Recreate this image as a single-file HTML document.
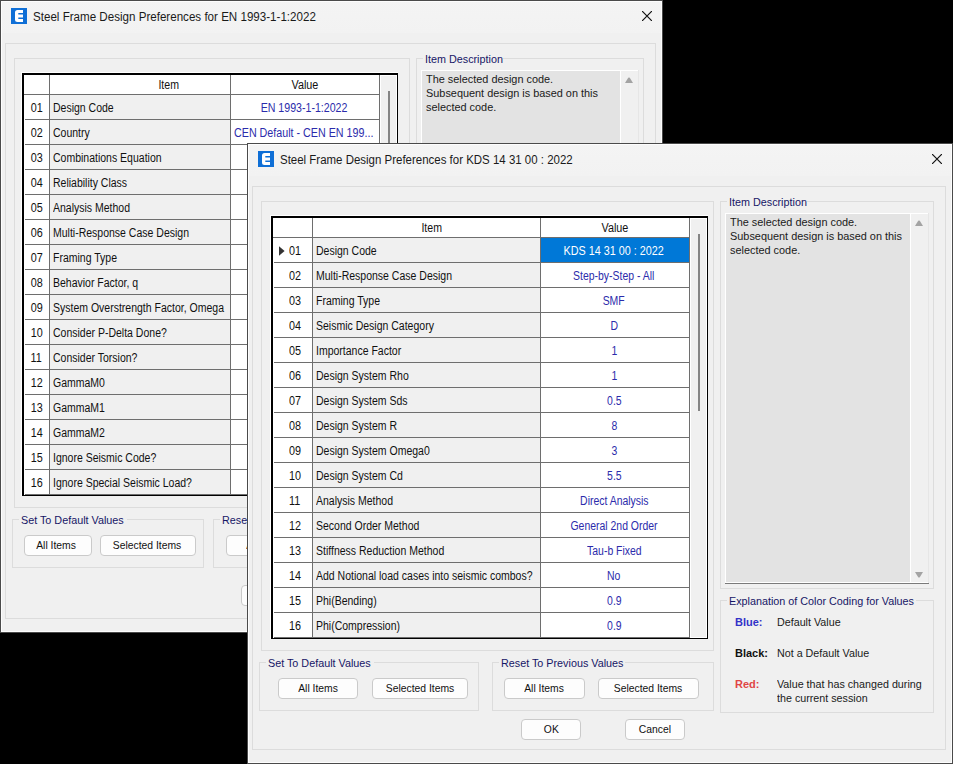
<!DOCTYPE html><html><head><meta charset="utf-8"><style>html,body{margin:0;padding:0}body{width:953px;height:764px;background:#000;position:relative;overflow:hidden;font-family:"Liberation Sans",sans-serif}</style></head><body>
<div style="position:absolute;left:0px;top:0px;width:663px;height:633px;background:#f0f0f0;overflow:hidden">
<div style="position:absolute;left:0px;top:0px;width:663px;height:33px;background:linear-gradient(#f4f4f4,#f2f2f2);"></div>
<svg style="position:absolute;left:11px;top:8px" width="16" height="16" viewBox="0 0 16 16"><rect x="0" y="0" width="16" height="16" fill="#0f6fd6"/><path d="M6.5 2 H12 V5 H7.3 V6.6 H12 V9.4 H7.3 V11 H12 V14 H6.5 Q4 14 4 11.5 V4.5 Q4 2 6.5 2 Z" fill="#fff"/></svg>
<div style="position:absolute;left:33px;top:10px;white-space:nowrap;font-size:12px;line-height:14px;color:#1a1a1a;transform:scaleX(0.966);transform-origin:left;">Steel Frame Design Preferences for EN 1993-1-1:2022</div>
<svg style="position:absolute;left:642px;top:11px" width="10" height="10" viewBox="0 0 10 10"><path d="M0 0 L10 10 M10 0 L0 10" stroke="#111" stroke-width="1.2"/></svg>
<div style="position:absolute;left:5px;top:43px;width:651px;height:576px;box-sizing:border-box;border:1px solid #dcdcdc;"></div>
<div style="position:absolute;left:14px;top:58px;width:396px;height:450px;box-sizing:border-box;border:1px solid #dcdcdc;"></div>
<div style="position:absolute;left:21px;top:72px;width:377px;height:424px;background:#fff;"></div>
<div style="position:absolute;left:22px;top:73px;width:376px;height:423px;box-sizing:border-box;border-top:2px solid #000;border-left:2px solid #000;border-right:1px solid #000;border-bottom:1px solid #000;"></div>
<div style="position:absolute;left:50px;top:95px;width:180px;height:400px;background:#f0f0f0;"></div>
<div style="position:absolute;left:380px;top:75px;width:17px;height:420px;background:#fff;"></div>
<div style="position:absolute;left:381px;top:76px;width:15px;height:418px;background:#f0f0f0;"></div>
<div style="position:absolute;left:388px;top:91px;width:2px;height:209px;background:#858585;"></div>
<div style="position:absolute;left:24px;top:94px;width:355px;height:1px;background:#6e6e6e;"></div>
<div style="position:absolute;left:49px;top:75px;width:1px;height:420px;background:#6e6e6e;"></div>
<div style="position:absolute;left:230px;top:75px;width:1px;height:420px;background:#6e6e6e;"></div>
<div style="position:absolute;left:379px;top:75px;width:1px;height:420px;background:#6e6e6e;"></div>
<div style="position:absolute;left:109px;top:78px;width:120px;height:14px;text-align:center;white-space:nowrap;font-size:12px;line-height:14px;color:#111;"><span style="display:inline-block;transform:scaleX(0.88);transform-origin:center">Item</span></div>
<div style="position:absolute;left:231px;top:78px;width:148px;height:14px;text-align:center;white-space:nowrap;font-size:12px;line-height:14px;color:#111;"><span style="display:inline-block;transform:scaleX(0.9);transform-origin:center">Value</span></div>
<div style="position:absolute;left:25px;top:119px;width:354px;height:1px;background:#6e6e6e;"></div>
<div style="position:absolute;left:24px;top:101px;width:25px;height:14px;text-align:center;white-space:nowrap;font-size:12px;line-height:14px;color:#111;"><span style="display:inline-block;transform:scaleX(0.9);transform-origin:center">01</span></div>
<div style="position:absolute;left:53px;top:101px;white-space:nowrap;font-size:12px;line-height:14px;color:#111;transform:scaleX(0.875);transform-origin:left;">Design Code</div>
<div style="position:absolute;left:230px;top:101px;width:148px;height:14px;text-align:center;white-space:nowrap;font-size:12px;line-height:14px;color:#2b2bab;"><span style="display:inline-block;transform:scaleX(0.885);transform-origin:center">EN 1993-1-1:2022</span></div>
<div style="position:absolute;left:25px;top:144px;width:354px;height:1px;background:#6e6e6e;"></div>
<div style="position:absolute;left:24px;top:126px;width:25px;height:14px;text-align:center;white-space:nowrap;font-size:12px;line-height:14px;color:#111;"><span style="display:inline-block;transform:scaleX(0.9);transform-origin:center">02</span></div>
<div style="position:absolute;left:53px;top:126px;white-space:nowrap;font-size:12px;line-height:14px;color:#111;transform:scaleX(0.875);transform-origin:left;">Country</div>
<div style="position:absolute;left:234px;top:126px;white-space:nowrap;font-size:12px;line-height:14px;color:#2b2bab;transform:scaleX(0.893);transform-origin:left;">CEN Default - CEN EN 199...</div>
<div style="position:absolute;left:25px;top:169px;width:354px;height:1px;background:#6e6e6e;"></div>
<div style="position:absolute;left:24px;top:151px;width:25px;height:14px;text-align:center;white-space:nowrap;font-size:12px;line-height:14px;color:#111;"><span style="display:inline-block;transform:scaleX(0.9);transform-origin:center">03</span></div>
<div style="position:absolute;left:53px;top:151px;white-space:nowrap;font-size:12px;line-height:14px;color:#111;transform:scaleX(0.875);transform-origin:left;">Combinations Equation</div>
<div style="position:absolute;left:25px;top:194px;width:354px;height:1px;background:#6e6e6e;"></div>
<div style="position:absolute;left:24px;top:176px;width:25px;height:14px;text-align:center;white-space:nowrap;font-size:12px;line-height:14px;color:#111;"><span style="display:inline-block;transform:scaleX(0.9);transform-origin:center">04</span></div>
<div style="position:absolute;left:53px;top:176px;white-space:nowrap;font-size:12px;line-height:14px;color:#111;transform:scaleX(0.875);transform-origin:left;">Reliability Class</div>
<div style="position:absolute;left:25px;top:219px;width:354px;height:1px;background:#6e6e6e;"></div>
<div style="position:absolute;left:24px;top:201px;width:25px;height:14px;text-align:center;white-space:nowrap;font-size:12px;line-height:14px;color:#111;"><span style="display:inline-block;transform:scaleX(0.9);transform-origin:center">05</span></div>
<div style="position:absolute;left:53px;top:201px;white-space:nowrap;font-size:12px;line-height:14px;color:#111;transform:scaleX(0.875);transform-origin:left;">Analysis Method</div>
<div style="position:absolute;left:25px;top:244px;width:354px;height:1px;background:#6e6e6e;"></div>
<div style="position:absolute;left:24px;top:226px;width:25px;height:14px;text-align:center;white-space:nowrap;font-size:12px;line-height:14px;color:#111;"><span style="display:inline-block;transform:scaleX(0.9);transform-origin:center">06</span></div>
<div style="position:absolute;left:53px;top:226px;white-space:nowrap;font-size:12px;line-height:14px;color:#111;transform:scaleX(0.875);transform-origin:left;">Multi-Response Case Design</div>
<div style="position:absolute;left:25px;top:269px;width:354px;height:1px;background:#6e6e6e;"></div>
<div style="position:absolute;left:24px;top:251px;width:25px;height:14px;text-align:center;white-space:nowrap;font-size:12px;line-height:14px;color:#111;"><span style="display:inline-block;transform:scaleX(0.9);transform-origin:center">07</span></div>
<div style="position:absolute;left:53px;top:251px;white-space:nowrap;font-size:12px;line-height:14px;color:#111;transform:scaleX(0.875);transform-origin:left;">Framing Type</div>
<div style="position:absolute;left:25px;top:294px;width:354px;height:1px;background:#6e6e6e;"></div>
<div style="position:absolute;left:24px;top:276px;width:25px;height:14px;text-align:center;white-space:nowrap;font-size:12px;line-height:14px;color:#111;"><span style="display:inline-block;transform:scaleX(0.9);transform-origin:center">08</span></div>
<div style="position:absolute;left:53px;top:276px;white-space:nowrap;font-size:12px;line-height:14px;color:#111;transform:scaleX(0.875);transform-origin:left;">Behavior Factor, q</div>
<div style="position:absolute;left:25px;top:319px;width:354px;height:1px;background:#6e6e6e;"></div>
<div style="position:absolute;left:24px;top:301px;width:25px;height:14px;text-align:center;white-space:nowrap;font-size:12px;line-height:14px;color:#111;"><span style="display:inline-block;transform:scaleX(0.9);transform-origin:center">09</span></div>
<div style="position:absolute;left:53px;top:301px;white-space:nowrap;font-size:12px;line-height:14px;color:#111;transform:scaleX(0.875);transform-origin:left;">System Overstrength Factor, Omega</div>
<div style="position:absolute;left:25px;top:344px;width:354px;height:1px;background:#6e6e6e;"></div>
<div style="position:absolute;left:24px;top:326px;width:25px;height:14px;text-align:center;white-space:nowrap;font-size:12px;line-height:14px;color:#111;"><span style="display:inline-block;transform:scaleX(0.9);transform-origin:center">10</span></div>
<div style="position:absolute;left:53px;top:326px;white-space:nowrap;font-size:12px;line-height:14px;color:#111;transform:scaleX(0.875);transform-origin:left;">Consider P-Delta Done?</div>
<div style="position:absolute;left:25px;top:369px;width:354px;height:1px;background:#6e6e6e;"></div>
<div style="position:absolute;left:24px;top:351px;width:25px;height:14px;text-align:center;white-space:nowrap;font-size:12px;line-height:14px;color:#111;"><span style="display:inline-block;transform:scaleX(0.9);transform-origin:center">11</span></div>
<div style="position:absolute;left:53px;top:351px;white-space:nowrap;font-size:12px;line-height:14px;color:#111;transform:scaleX(0.875);transform-origin:left;">Consider Torsion?</div>
<div style="position:absolute;left:25px;top:394px;width:354px;height:1px;background:#6e6e6e;"></div>
<div style="position:absolute;left:24px;top:376px;width:25px;height:14px;text-align:center;white-space:nowrap;font-size:12px;line-height:14px;color:#111;"><span style="display:inline-block;transform:scaleX(0.9);transform-origin:center">12</span></div>
<div style="position:absolute;left:53px;top:376px;white-space:nowrap;font-size:12px;line-height:14px;color:#111;transform:scaleX(0.875);transform-origin:left;">GammaM0</div>
<div style="position:absolute;left:25px;top:419px;width:354px;height:1px;background:#6e6e6e;"></div>
<div style="position:absolute;left:24px;top:401px;width:25px;height:14px;text-align:center;white-space:nowrap;font-size:12px;line-height:14px;color:#111;"><span style="display:inline-block;transform:scaleX(0.9);transform-origin:center">13</span></div>
<div style="position:absolute;left:53px;top:401px;white-space:nowrap;font-size:12px;line-height:14px;color:#111;transform:scaleX(0.875);transform-origin:left;">GammaM1</div>
<div style="position:absolute;left:25px;top:444px;width:354px;height:1px;background:#6e6e6e;"></div>
<div style="position:absolute;left:24px;top:426px;width:25px;height:14px;text-align:center;white-space:nowrap;font-size:12px;line-height:14px;color:#111;"><span style="display:inline-block;transform:scaleX(0.9);transform-origin:center">14</span></div>
<div style="position:absolute;left:53px;top:426px;white-space:nowrap;font-size:12px;line-height:14px;color:#111;transform:scaleX(0.875);transform-origin:left;">GammaM2</div>
<div style="position:absolute;left:25px;top:469px;width:354px;height:1px;background:#6e6e6e;"></div>
<div style="position:absolute;left:24px;top:451px;width:25px;height:14px;text-align:center;white-space:nowrap;font-size:12px;line-height:14px;color:#111;"><span style="display:inline-block;transform:scaleX(0.9);transform-origin:center">15</span></div>
<div style="position:absolute;left:53px;top:451px;white-space:nowrap;font-size:12px;line-height:14px;color:#111;transform:scaleX(0.875);transform-origin:left;">Ignore Seismic Code?</div>
<div style="position:absolute;left:25px;top:494px;width:354px;height:1px;background:#6e6e6e;"></div>
<div style="position:absolute;left:24px;top:476px;width:25px;height:14px;text-align:center;white-space:nowrap;font-size:12px;line-height:14px;color:#111;"><span style="display:inline-block;transform:scaleX(0.9);transform-origin:center">16</span></div>
<div style="position:absolute;left:53px;top:476px;white-space:nowrap;font-size:12px;line-height:14px;color:#111;transform:scaleX(0.875);transform-origin:left;">Ignore Special Seismic Load?</div>
<div style="position:absolute;left:416px;top:58px;width:228px;height:400px;box-sizing:border-box;border:1px solid #dcdcdc;"></div>
<div style="position:absolute;left:423px;top:57px;width:80px;height:3px;background:#f0f0f0;"></div>
<div style="position:absolute;left:425px;top:53px;white-space:nowrap;font-size:11px;line-height:13px;color:#161666;transform:scaleX(0.98);transform-origin:left;">Item Description</div>
<div style="position:absolute;left:421px;top:70px;width:217px;height:380px;background:#fff;"></div>
<div style="position:absolute;left:638px;top:70px;width:1px;height:380px;background:#e6e6e6;"></div>
<div style="position:absolute;left:422px;top:71px;width:198px;height:378px;background:#e3e3e3;"></div>
<div style="position:absolute;left:621px;top:71px;width:17px;height:378px;background:#f0f0f0;"></div>
<div style="position:absolute;left:421px;top:450px;width:218px;height:1px;background:#7a7a7a;"></div>
<svg style="position:absolute;left:625px;top:77px" width="8" height="6" viewBox="0 0 8 6"><path d="M0 6 L3.2 0.8 Q4 0 4.8 0.8 L8 6 Z" fill="#a3a3a3"/></svg>
<div style="position:absolute;left:426px;top:73px;white-space:nowrap;font-size:11px;line-height:13px;color:#1a1a1a;transform:scaleX(0.99);transform-origin:left;">The selected design code.</div>
<div style="position:absolute;left:426px;top:87px;white-space:nowrap;font-size:11px;line-height:13px;color:#1a1a1a;transform:scaleX(0.99);transform-origin:left;">Subsequent design is based on this</div>
<div style="position:absolute;left:426px;top:101px;white-space:nowrap;font-size:11px;line-height:13px;color:#1a1a1a;transform:scaleX(0.99);transform-origin:left;">selected code.</div>
<div style="position:absolute;left:12px;top:519px;width:192px;height:49px;box-sizing:border-box;border:1px solid #dcdcdc;"></div>
<div style="position:absolute;left:19px;top:518px;width:108px;height:3px;background:#f0f0f0;"></div>
<div style="position:absolute;left:21px;top:514px;white-space:nowrap;font-size:11px;line-height:13px;color:#161666;transform:scaleX(0.98);transform-origin:left;">Set To Default Values</div>
<div style="position:absolute;left:24px;top:535px;width:68px;height:21px;box-sizing:border-box;border:1px solid #cacaca;border-radius:4px;background:#fdfdfd;"></div>
<div style="position:absolute;left:22px;top:539px;width:68px;height:13px;text-align:center;white-space:nowrap;font-size:11.5px;line-height:13px;color:#111;"><span style="display:inline-block;transform:scaleX(0.9);transform-origin:center">All Items</span></div>
<div style="position:absolute;left:100px;top:535px;width:96px;height:21px;box-sizing:border-box;border:1px solid #cacaca;border-radius:4px;background:#fdfdfd;"></div>
<div style="position:absolute;left:99px;top:539px;width:96px;height:13px;text-align:center;white-space:nowrap;font-size:11.5px;line-height:13px;color:#111;"><span style="display:inline-block;transform:scaleX(0.9);transform-origin:center">Selected Items</span></div>
<div style="position:absolute;left:213px;top:519px;width:200px;height:49px;box-sizing:border-box;border:1px solid #dcdcdc;"></div>
<div style="position:absolute;left:220px;top:518px;width:126px;height:3px;background:#f0f0f0;"></div>
<div style="position:absolute;left:222px;top:514px;white-space:nowrap;font-size:11px;line-height:13px;color:#161666;transform:scaleX(0.98);transform-origin:left;">Reset To Previous Values</div>
<div style="position:absolute;left:226px;top:535px;width:80px;height:21px;box-sizing:border-box;border:1px solid #cacaca;border-radius:4px;background:#fdfdfd;"></div>
<div style="position:absolute;left:226px;top:539px;width:80px;height:13px;text-align:center;white-space:nowrap;font-size:11.5px;line-height:13px;color:#111;"><span style="display:inline-block;transform:scaleX(0.9);transform-origin:center">All Items</span></div>
<div style="position:absolute;left:241px;top:585px;width:60px;height:21px;box-sizing:border-box;border:1px solid #cacaca;border-radius:4px;background:#fdfdfd;"></div>
<div style="position:absolute;left:241px;top:589px;width:60px;height:13px;text-align:center;white-space:nowrap;font-size:11.5px;line-height:13px;color:#111;"><span style="display:inline-block;transform:scaleX(0.9);transform-origin:center">OK</span></div>
<div style="position:absolute;left:0px;top:0px;width:663px;height:633px;box-sizing:border-box;border:1px solid #4a4a4a;box-shadow:inset 0 0 0 1px #fdfdfd;"></div>
</div>
<div style="position:absolute;left:247px;top:143px;width:706px;height:621px;background:#f0f0f0;overflow:hidden">
<div style="position:absolute;left:0px;top:0px;width:706px;height:33px;background:linear-gradient(#f4f4f4,#f2f2f2);"></div>
<svg style="position:absolute;left:11px;top:8px" width="16" height="16" viewBox="0 0 16 16"><rect x="0" y="0" width="16" height="16" fill="#0f6fd6"/><path d="M6.5 2 H12 V5 H7.3 V6.6 H12 V9.4 H7.3 V11 H12 V14 H6.5 Q4 14 4 11.5 V4.5 Q4 2 6.5 2 Z" fill="#fff"/></svg>
<div style="position:absolute;left:33px;top:10px;white-space:nowrap;font-size:12px;line-height:14px;color:#1a1a1a;transform:scaleX(0.956);transform-origin:left;">Steel Frame Design Preferences for KDS 14 31 00 : 2022</div>
<svg style="position:absolute;left:685px;top:11px" width="10" height="10" viewBox="0 0 10 10"><path d="M0 0 L10 10 M10 0 L0 10" stroke="#111" stroke-width="1.2"/></svg>
<div style="position:absolute;left:5px;top:43px;width:694px;height:564px;box-sizing:border-box;border:1px solid #dcdcdc;"></div>
<div style="position:absolute;left:14px;top:58px;width:453px;height:450px;box-sizing:border-box;border:1px solid #dcdcdc;"></div>
<div style="position:absolute;left:23px;top:72px;width:438px;height:424px;background:#fff;"></div>
<div style="position:absolute;left:24px;top:73px;width:437px;height:423px;box-sizing:border-box;border-top:2px solid #000;border-left:2px solid #000;border-right:1px solid #000;border-bottom:1px solid #000;"></div>
<div style="position:absolute;left:66px;top:95px;width:227px;height:400px;background:#f0f0f0;"></div>
<div style="position:absolute;left:443px;top:75px;width:17px;height:420px;background:#fff;"></div>
<div style="position:absolute;left:444px;top:76px;width:15px;height:418px;background:#f0f0f0;"></div>
<div style="position:absolute;left:451px;top:91px;width:2px;height:177px;background:#858585;"></div>
<div style="position:absolute;left:26px;top:94px;width:416px;height:1px;background:#6e6e6e;"></div>
<div style="position:absolute;left:65px;top:75px;width:1px;height:420px;background:#6e6e6e;"></div>
<div style="position:absolute;left:293px;top:75px;width:1px;height:420px;background:#6e6e6e;"></div>
<div style="position:absolute;left:442px;top:75px;width:1px;height:420px;background:#6e6e6e;"></div>
<div style="position:absolute;left:125px;top:78px;width:120px;height:14px;text-align:center;white-space:nowrap;font-size:12px;line-height:14px;color:#111;"><span style="display:inline-block;transform:scaleX(0.88);transform-origin:center">Item</span></div>
<div style="position:absolute;left:294px;top:78px;width:148px;height:14px;text-align:center;white-space:nowrap;font-size:12px;line-height:14px;color:#111;"><span style="display:inline-block;transform:scaleX(0.9);transform-origin:center">Value</span></div>
<div style="position:absolute;left:27px;top:119px;width:415px;height:1px;background:#6e6e6e;"></div>
<div style="position:absolute;left:294px;top:95px;width:148px;height:24px;background:#0078d7;"></div>
<svg style="position:absolute;left:32px;top:103px" width="6" height="10" viewBox="0 0 6 10"><path d="M0 0.3 L5.6 5 L0 9.7 Z" fill="#333"/></svg>
<div style="position:absolute;left:42px;top:101px;white-space:nowrap;font-size:12px;line-height:14px;color:#111;transform:scaleX(0.9);transform-origin:left;">01</div>
<div style="position:absolute;left:69px;top:101px;white-space:nowrap;font-size:12px;line-height:14px;color:#111;transform:scaleX(0.875);transform-origin:left;">Design Code</div>
<div style="position:absolute;left:293px;top:101px;width:148px;height:14px;text-align:center;white-space:nowrap;font-size:12px;line-height:14px;color:#fff;"><span style="display:inline-block;transform:scaleX(0.9);transform-origin:center">KDS 14 31 00 : 2022</span></div>
<div style="position:absolute;left:27px;top:144px;width:415px;height:1px;background:#6e6e6e;"></div>
<div style="position:absolute;left:42px;top:126px;white-space:nowrap;font-size:12px;line-height:14px;color:#111;transform:scaleX(0.9);transform-origin:left;">02</div>
<div style="position:absolute;left:69px;top:126px;white-space:nowrap;font-size:12px;line-height:14px;color:#111;transform:scaleX(0.875);transform-origin:left;">Multi-Response Case Design</div>
<div style="position:absolute;left:293px;top:126px;width:148px;height:14px;text-align:center;white-space:nowrap;font-size:12px;line-height:14px;color:#2b2bab;"><span style="display:inline-block;transform:scaleX(0.87);transform-origin:center">Step-by-Step - All</span></div>
<div style="position:absolute;left:27px;top:169px;width:415px;height:1px;background:#6e6e6e;"></div>
<div style="position:absolute;left:42px;top:151px;white-space:nowrap;font-size:12px;line-height:14px;color:#111;transform:scaleX(0.9);transform-origin:left;">03</div>
<div style="position:absolute;left:69px;top:151px;white-space:nowrap;font-size:12px;line-height:14px;color:#111;transform:scaleX(0.875);transform-origin:left;">Framing Type</div>
<div style="position:absolute;left:293px;top:151px;width:148px;height:14px;text-align:center;white-space:nowrap;font-size:12px;line-height:14px;color:#2b2bab;"><span style="display:inline-block;transform:scaleX(0.87);transform-origin:center">SMF</span></div>
<div style="position:absolute;left:27px;top:194px;width:415px;height:1px;background:#6e6e6e;"></div>
<div style="position:absolute;left:42px;top:176px;white-space:nowrap;font-size:12px;line-height:14px;color:#111;transform:scaleX(0.9);transform-origin:left;">04</div>
<div style="position:absolute;left:69px;top:176px;white-space:nowrap;font-size:12px;line-height:14px;color:#111;transform:scaleX(0.875);transform-origin:left;">Seismic Design Category</div>
<div style="position:absolute;left:293px;top:176px;width:148px;height:14px;text-align:center;white-space:nowrap;font-size:12px;line-height:14px;color:#2b2bab;"><span style="display:inline-block;transform:scaleX(0.87);transform-origin:center">D</span></div>
<div style="position:absolute;left:27px;top:219px;width:415px;height:1px;background:#6e6e6e;"></div>
<div style="position:absolute;left:42px;top:201px;white-space:nowrap;font-size:12px;line-height:14px;color:#111;transform:scaleX(0.9);transform-origin:left;">05</div>
<div style="position:absolute;left:69px;top:201px;white-space:nowrap;font-size:12px;line-height:14px;color:#111;transform:scaleX(0.875);transform-origin:left;">Importance Factor</div>
<div style="position:absolute;left:293px;top:201px;width:148px;height:14px;text-align:center;white-space:nowrap;font-size:12px;line-height:14px;color:#2b2bab;"><span style="display:inline-block;transform:scaleX(0.87);transform-origin:center">1</span></div>
<div style="position:absolute;left:27px;top:244px;width:415px;height:1px;background:#6e6e6e;"></div>
<div style="position:absolute;left:42px;top:226px;white-space:nowrap;font-size:12px;line-height:14px;color:#111;transform:scaleX(0.9);transform-origin:left;">06</div>
<div style="position:absolute;left:69px;top:226px;white-space:nowrap;font-size:12px;line-height:14px;color:#111;transform:scaleX(0.875);transform-origin:left;">Design System Rho</div>
<div style="position:absolute;left:293px;top:226px;width:148px;height:14px;text-align:center;white-space:nowrap;font-size:12px;line-height:14px;color:#2b2bab;"><span style="display:inline-block;transform:scaleX(0.87);transform-origin:center">1</span></div>
<div style="position:absolute;left:27px;top:269px;width:415px;height:1px;background:#6e6e6e;"></div>
<div style="position:absolute;left:42px;top:251px;white-space:nowrap;font-size:12px;line-height:14px;color:#111;transform:scaleX(0.9);transform-origin:left;">07</div>
<div style="position:absolute;left:69px;top:251px;white-space:nowrap;font-size:12px;line-height:14px;color:#111;transform:scaleX(0.875);transform-origin:left;">Design System Sds</div>
<div style="position:absolute;left:293px;top:251px;width:148px;height:14px;text-align:center;white-space:nowrap;font-size:12px;line-height:14px;color:#2b2bab;"><span style="display:inline-block;transform:scaleX(0.87);transform-origin:center">0.5</span></div>
<div style="position:absolute;left:27px;top:294px;width:415px;height:1px;background:#6e6e6e;"></div>
<div style="position:absolute;left:42px;top:276px;white-space:nowrap;font-size:12px;line-height:14px;color:#111;transform:scaleX(0.9);transform-origin:left;">08</div>
<div style="position:absolute;left:69px;top:276px;white-space:nowrap;font-size:12px;line-height:14px;color:#111;transform:scaleX(0.875);transform-origin:left;">Design System R</div>
<div style="position:absolute;left:293px;top:276px;width:148px;height:14px;text-align:center;white-space:nowrap;font-size:12px;line-height:14px;color:#2b2bab;"><span style="display:inline-block;transform:scaleX(0.87);transform-origin:center">8</span></div>
<div style="position:absolute;left:27px;top:319px;width:415px;height:1px;background:#6e6e6e;"></div>
<div style="position:absolute;left:42px;top:301px;white-space:nowrap;font-size:12px;line-height:14px;color:#111;transform:scaleX(0.9);transform-origin:left;">09</div>
<div style="position:absolute;left:69px;top:301px;white-space:nowrap;font-size:12px;line-height:14px;color:#111;transform:scaleX(0.875);transform-origin:left;">Design System Omega0</div>
<div style="position:absolute;left:293px;top:301px;width:148px;height:14px;text-align:center;white-space:nowrap;font-size:12px;line-height:14px;color:#2b2bab;"><span style="display:inline-block;transform:scaleX(0.87);transform-origin:center">3</span></div>
<div style="position:absolute;left:27px;top:344px;width:415px;height:1px;background:#6e6e6e;"></div>
<div style="position:absolute;left:42px;top:326px;white-space:nowrap;font-size:12px;line-height:14px;color:#111;transform:scaleX(0.9);transform-origin:left;">10</div>
<div style="position:absolute;left:69px;top:326px;white-space:nowrap;font-size:12px;line-height:14px;color:#111;transform:scaleX(0.875);transform-origin:left;">Design System Cd</div>
<div style="position:absolute;left:293px;top:326px;width:148px;height:14px;text-align:center;white-space:nowrap;font-size:12px;line-height:14px;color:#2b2bab;"><span style="display:inline-block;transform:scaleX(0.87);transform-origin:center">5.5</span></div>
<div style="position:absolute;left:27px;top:369px;width:415px;height:1px;background:#6e6e6e;"></div>
<div style="position:absolute;left:42px;top:351px;white-space:nowrap;font-size:12px;line-height:14px;color:#111;transform:scaleX(0.9);transform-origin:left;">11</div>
<div style="position:absolute;left:69px;top:351px;white-space:nowrap;font-size:12px;line-height:14px;color:#111;transform:scaleX(0.875);transform-origin:left;">Analysis Method</div>
<div style="position:absolute;left:293px;top:351px;width:148px;height:14px;text-align:center;white-space:nowrap;font-size:12px;line-height:14px;color:#2b2bab;"><span style="display:inline-block;transform:scaleX(0.87);transform-origin:center">Direct Analysis</span></div>
<div style="position:absolute;left:27px;top:394px;width:415px;height:1px;background:#6e6e6e;"></div>
<div style="position:absolute;left:42px;top:376px;white-space:nowrap;font-size:12px;line-height:14px;color:#111;transform:scaleX(0.9);transform-origin:left;">12</div>
<div style="position:absolute;left:69px;top:376px;white-space:nowrap;font-size:12px;line-height:14px;color:#111;transform:scaleX(0.875);transform-origin:left;">Second Order Method</div>
<div style="position:absolute;left:293px;top:376px;width:148px;height:14px;text-align:center;white-space:nowrap;font-size:12px;line-height:14px;color:#2b2bab;"><span style="display:inline-block;transform:scaleX(0.87);transform-origin:center">General 2nd Order</span></div>
<div style="position:absolute;left:27px;top:419px;width:415px;height:1px;background:#6e6e6e;"></div>
<div style="position:absolute;left:42px;top:401px;white-space:nowrap;font-size:12px;line-height:14px;color:#111;transform:scaleX(0.9);transform-origin:left;">13</div>
<div style="position:absolute;left:69px;top:401px;white-space:nowrap;font-size:12px;line-height:14px;color:#111;transform:scaleX(0.875);transform-origin:left;">Stiffness Reduction Method</div>
<div style="position:absolute;left:293px;top:401px;width:148px;height:14px;text-align:center;white-space:nowrap;font-size:12px;line-height:14px;color:#2b2bab;"><span style="display:inline-block;transform:scaleX(0.87);transform-origin:center">Tau-b Fixed</span></div>
<div style="position:absolute;left:27px;top:444px;width:415px;height:1px;background:#6e6e6e;"></div>
<div style="position:absolute;left:42px;top:426px;white-space:nowrap;font-size:12px;line-height:14px;color:#111;transform:scaleX(0.9);transform-origin:left;">14</div>
<div style="position:absolute;left:69px;top:426px;white-space:nowrap;font-size:12px;line-height:14px;color:#111;transform:scaleX(0.875);transform-origin:left;">Add Notional load cases into seismic combos?</div>
<div style="position:absolute;left:293px;top:426px;width:148px;height:14px;text-align:center;white-space:nowrap;font-size:12px;line-height:14px;color:#2b2bab;"><span style="display:inline-block;transform:scaleX(0.87);transform-origin:center">No</span></div>
<div style="position:absolute;left:27px;top:469px;width:415px;height:1px;background:#6e6e6e;"></div>
<div style="position:absolute;left:42px;top:451px;white-space:nowrap;font-size:12px;line-height:14px;color:#111;transform:scaleX(0.9);transform-origin:left;">15</div>
<div style="position:absolute;left:69px;top:451px;white-space:nowrap;font-size:12px;line-height:14px;color:#111;transform:scaleX(0.875);transform-origin:left;">Phi(Bending)</div>
<div style="position:absolute;left:293px;top:451px;width:148px;height:14px;text-align:center;white-space:nowrap;font-size:12px;line-height:14px;color:#2b2bab;"><span style="display:inline-block;transform:scaleX(0.87);transform-origin:center">0.9</span></div>
<div style="position:absolute;left:27px;top:494px;width:415px;height:1px;background:#6e6e6e;"></div>
<div style="position:absolute;left:42px;top:476px;white-space:nowrap;font-size:12px;line-height:14px;color:#111;transform:scaleX(0.9);transform-origin:left;">16</div>
<div style="position:absolute;left:69px;top:476px;white-space:nowrap;font-size:12px;line-height:14px;color:#111;transform:scaleX(0.875);transform-origin:left;">Phi(Compression)</div>
<div style="position:absolute;left:293px;top:476px;width:148px;height:14px;text-align:center;white-space:nowrap;font-size:12px;line-height:14px;color:#2b2bab;"><span style="display:inline-block;transform:scaleX(0.87);transform-origin:center">0.9</span></div>
<div style="position:absolute;left:473px;top:58px;width:214px;height:388px;box-sizing:border-box;border:1px solid #dcdcdc;"></div>
<div style="position:absolute;left:480px;top:57px;width:80px;height:3px;background:#f0f0f0;"></div>
<div style="position:absolute;left:482px;top:53px;white-space:nowrap;font-size:11px;line-height:13px;color:#161666;transform:scaleX(0.98);transform-origin:left;">Item Description</div>
<div style="position:absolute;left:478px;top:70px;width:203px;height:370px;background:#fff;"></div>
<div style="position:absolute;left:681px;top:70px;width:1px;height:370px;background:#e6e6e6;"></div>
<div style="position:absolute;left:479px;top:71px;width:184px;height:368px;background:#e3e3e3;"></div>
<div style="position:absolute;left:664px;top:71px;width:17px;height:368px;background:#f0f0f0;"></div>
<div style="position:absolute;left:478px;top:440px;width:204px;height:1px;background:#7a7a7a;"></div>
<svg style="position:absolute;left:668px;top:77px" width="8" height="6" viewBox="0 0 8 6"><path d="M0 6 L3.2 0.8 Q4 0 4.8 0.8 L8 6 Z" fill="#a3a3a3"/></svg>
<div style="position:absolute;left:483px;top:73px;white-space:nowrap;font-size:11px;line-height:13px;color:#1a1a1a;transform:scaleX(0.99);transform-origin:left;">The selected design code.</div>
<div style="position:absolute;left:483px;top:87px;white-space:nowrap;font-size:11px;line-height:13px;color:#1a1a1a;transform:scaleX(0.99);transform-origin:left;">Subsequent design is based on this</div>
<div style="position:absolute;left:483px;top:101px;white-space:nowrap;font-size:11px;line-height:13px;color:#1a1a1a;transform:scaleX(0.99);transform-origin:left;">selected code.</div>
<svg style="position:absolute;left:668px;top:429px" width="8" height="6" viewBox="0 0 8 6"><path d="M0 0 L3.2 5.2 Q4 6 4.8 5.2 L8 0 Z" fill="#a3a3a3"/></svg>
<div style="position:absolute;left:473px;top:457px;width:214px;height:113px;box-sizing:border-box;border:1px solid #dcdcdc;"></div>
<div style="position:absolute;left:480px;top:456px;width:189px;height:3px;background:#f0f0f0;"></div>
<div style="position:absolute;left:482px;top:452px;white-space:nowrap;font-size:11px;line-height:13px;color:#161666;transform:scaleX(0.98);transform-origin:left;">Explanation of Color Coding for Values</div>
<div style="position:absolute;left:488px;top:473px;white-space:nowrap;font-size:11px;line-height:13px;color:#3232c8;transform:scaleX(1.0);transform-origin:left;font-weight:bold;">Blue:</div>
<div style="position:absolute;left:530px;top:473px;white-space:nowrap;font-size:11px;line-height:13px;color:#1a1a1a;transform:scaleX(0.975);transform-origin:left;">Default Value</div>
<div style="position:absolute;left:488px;top:504px;white-space:nowrap;font-size:11px;line-height:13px;color:#111;transform:scaleX(1.0);transform-origin:left;font-weight:bold;">Black:</div>
<div style="position:absolute;left:530px;top:504px;white-space:nowrap;font-size:11px;line-height:13px;color:#1a1a1a;transform:scaleX(0.975);transform-origin:left;">Not a Default Value</div>
<div style="position:absolute;left:488px;top:535px;white-space:nowrap;font-size:11px;line-height:13px;color:#e04545;transform:scaleX(1.0);transform-origin:left;font-weight:bold;">Red:</div>
<div style="position:absolute;left:530px;top:535px;white-space:nowrap;font-size:11px;line-height:13px;color:#1a1a1a;transform:scaleX(0.975);transform-origin:left;">Value that has changed during</div>
<div style="position:absolute;left:530px;top:549px;white-space:nowrap;font-size:11px;line-height:13px;color:#1a1a1a;transform:scaleX(0.975);transform-origin:left;">the current session</div>
<div style="position:absolute;left:12px;top:519px;width:220px;height:49px;box-sizing:border-box;border:1px solid #dcdcdc;"></div>
<div style="position:absolute;left:19px;top:518px;width:108px;height:3px;background:#f0f0f0;"></div>
<div style="position:absolute;left:21px;top:514px;white-space:nowrap;font-size:11px;line-height:13px;color:#161666;transform:scaleX(0.98);transform-origin:left;">Set To Default Values</div>
<div style="position:absolute;left:31px;top:535px;width:80px;height:21px;box-sizing:border-box;border:1px solid #cacaca;border-radius:4px;background:#fdfdfd;"></div>
<div style="position:absolute;left:31px;top:539px;width:80px;height:13px;text-align:center;white-space:nowrap;font-size:11.5px;line-height:13px;color:#111;"><span style="display:inline-block;transform:scaleX(0.9);transform-origin:center">All Items</span></div>
<div style="position:absolute;left:125px;top:535px;width:96px;height:21px;box-sizing:border-box;border:1px solid #cacaca;border-radius:4px;background:#fdfdfd;"></div>
<div style="position:absolute;left:125px;top:539px;width:96px;height:13px;text-align:center;white-space:nowrap;font-size:11.5px;line-height:13px;color:#111;"><span style="display:inline-block;transform:scaleX(0.9);transform-origin:center">Selected Items</span></div>
<div style="position:absolute;left:245px;top:519px;width:222px;height:49px;box-sizing:border-box;border:1px solid #dcdcdc;"></div>
<div style="position:absolute;left:252px;top:518px;width:126px;height:3px;background:#f0f0f0;"></div>
<div style="position:absolute;left:254px;top:514px;white-space:nowrap;font-size:11px;line-height:13px;color:#161666;transform:scaleX(0.98);transform-origin:left;">Reset To Previous Values</div>
<div style="position:absolute;left:257px;top:535px;width:81px;height:21px;box-sizing:border-box;border:1px solid #cacaca;border-radius:4px;background:#fdfdfd;"></div>
<div style="position:absolute;left:257px;top:539px;width:81px;height:13px;text-align:center;white-space:nowrap;font-size:11.5px;line-height:13px;color:#111;"><span style="display:inline-block;transform:scaleX(0.9);transform-origin:center">All Items</span></div>
<div style="position:absolute;left:351px;top:535px;width:101px;height:21px;box-sizing:border-box;border:1px solid #cacaca;border-radius:4px;background:#fdfdfd;"></div>
<div style="position:absolute;left:351px;top:539px;width:101px;height:13px;text-align:center;white-space:nowrap;font-size:11.5px;line-height:13px;color:#111;"><span style="display:inline-block;transform:scaleX(0.9);transform-origin:center">Selected Items</span></div>
<div style="position:absolute;left:274px;top:576px;width:60px;height:21px;box-sizing:border-box;border:1px solid #cacaca;border-radius:4px;background:#fdfdfd;"></div>
<div style="position:absolute;left:274px;top:580px;width:60px;height:13px;text-align:center;white-space:nowrap;font-size:11.5px;line-height:13px;color:#111;"><span style="display:inline-block;transform:scaleX(0.9);transform-origin:center">OK</span></div>
<div style="position:absolute;left:378px;top:576px;width:60px;height:21px;box-sizing:border-box;border:1px solid #cacaca;border-radius:4px;background:#fdfdfd;"></div>
<div style="position:absolute;left:378px;top:580px;width:60px;height:13px;text-align:center;white-space:nowrap;font-size:11.5px;line-height:13px;color:#111;"><span style="display:inline-block;transform:scaleX(0.9);transform-origin:center">Cancel</span></div>
<div style="position:absolute;left:0px;top:0px;width:706px;height:621px;box-sizing:border-box;border:1px solid #4a4a4a;box-shadow:inset 0 0 0 1px #fdfdfd;"></div>
</div>
</body></html>
